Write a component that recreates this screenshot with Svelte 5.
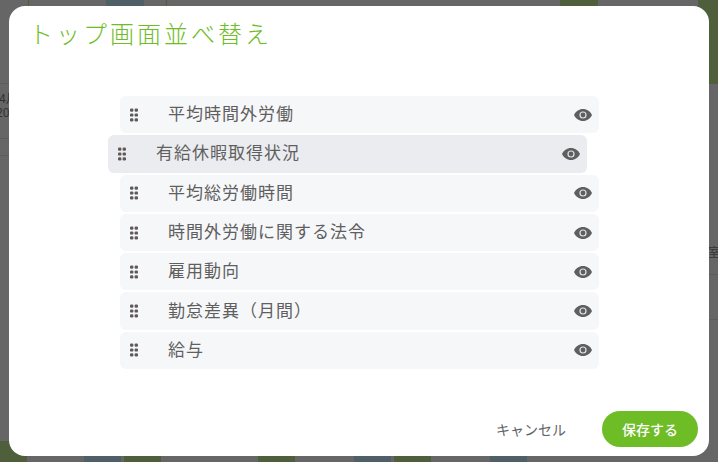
<script>
  const items = [
    { name: '平均時間外労働' },
    { name: '有給休暇取得状況', dragging: true },
    { name: '平均総労働時間' },
    { name: '時間外労働に関する法令' },
    { name: '雇用動向' },
    { name: '勤怠差異（月間）' },
    { name: '給与' }
  ]

  // chart columns still showing behind the overlay
  const bars = [
    ['blue', 106, 0, 38, 6],
    ['green', 560, 0, 38, 6],
    ['green', 698, 0, 20, 84],
    ['green', 28, 0, 1, 6],
    ['green', 166, 0, 1, 6],
    ['green', 0, 441, 27, 21],
    ['blue', 84, 456, 37, 6],
    ['green', 124, 456, 37, 6],
    ['green', 258, 456, 37, 6],
    ['blue', 354, 456, 37, 6],
    ['green', 394, 456, 37, 6],
    ['blue', 490, 456, 37, 6]
  ]
  const lines = [
    [0, 83, 9],
    [0, 138, 9],
    [0, 155, 9],
    [709, 274, 9],
    [709, 319, 9]
  ]
</script>

<div class="page">
  <div class="backdrop">
    {#each bars as [color, x, y, w, h]}
      <span class="bar {color}" style="left:{x}px;top:{y}px;width:{w}px;height:{h}px"></span>
    {/each}
    {#each lines as [x, y, w]}
      <span class="bar line" style="left:{x}px;top:{y}px;width:{w}px"></span>
    {/each}
    <span class="stray" style="left:-1px;top:92px">4月</span>
    <span class="stray" style="left:-4px;top:106px">20</span>
    <span class="stray" style="left:708px;top:246px">室</span>
  </div>

  <div class="modal">
    <h1 class="title">トップ画面並べ替え</h1>

    <ul class="list">
      {#each items as item}
        <li class="row" class:dragging={item.dragging}>
          <svg class="grip" width="8" height="14" viewBox="0 0 8 14" fill="#5f5a58">
            <rect x="0" y="0.500" width="3.400" height="3.200" rx="1.200" />
            <rect x="4.600" y="0.500" width="3.400" height="3.200" rx="1.200" />
            <rect x="0" y="5.400" width="3.400" height="3.200" rx="1.200" />
            <rect x="4.600" y="5.400" width="3.400" height="3.200" rx="1.200" />
            <rect x="0" y="10.300" width="3.400" height="3.200" rx="1.200" />
            <rect x="4.600" y="10.300" width="3.400" height="3.200" rx="1.200" />
          </svg>
          <span class="name">{item.name}</span>
          <svg class="eye" width="18" height="12" viewBox="0 0 18 12">
            <path fill="#5f5f5f" d="M9 0C5 0 1.700 2.500 0 6c1.700 3.500 5 6 9 6s7.300-2.500 9-6c-1.700-3.500-5-6-9-6z" />
            <circle cx="9" cy="6" r="3.600" fill="#dfe3e6" />
            <circle cx="9" cy="6" r="2.400" fill="#5f5f5f" />
          </svg>
        </li>
      {/each}
    </ul>

    <div class="actions">
      <button class="cancel">キャンセル</button>
      <button class="save">保存する</button>
    </div>
  </div>
</div>

<style>
  :global(body) {
    margin: 0;
    overflow: hidden;
  }
  .page {
    width: 718px;
    height: 462px;
    background: #666;
    box-sizing: border-box;
    padding: 6px 9px;
    position: relative;
    overflow: hidden;
    font-family: Roboto, "Noto Sans CJK JP", sans-serif;
  }
  .backdrop {
    position: absolute;
    inset: 0;
  }
  .bar {
    position: absolute;
  }
  .blue { background: #4f5f68; }
  .green { background: #4f5f3c; }
  .line {
    height: 1px;
    background: #5c5c5c;
  }
  .stray {
    position: absolute;
    font-size: 12px;
    line-height: 14px;
    color: #333;
  }
  .modal {
    position: relative;
    width: 700px;
    height: 450px;
    background: #fff;
    border-radius: 16px;
    display: flex;
    flex-direction: column;
  }
  .title {
    margin: 0;
    padding: 13px 0 0 20px;
    font-size: 24px;
    line-height: 32px;
    font-weight: 300;
    letter-spacing: 3px;
    color: #6ebc26;
  }
  .list {
    list-style: none;
    margin: 45px 0 0 111px;
    padding: 0;
    width: 479px;
    display: flex;
    flex-direction: column;
    gap: 2px;
  }
  .row {
    height: 37.300px;
    background: #f6f7f9;
    border-radius: 6px;
    display: flex;
    align-items: center;
    padding: 0 7px 0 10px;
    color: #5f5f5f;
    font-size: 17px;
    letter-spacing: 1px;
  }
  .row.dragging {
    background: #ebecef;
    transform: translateX(-12px);
  }
  .grip {
    flex: none;
  }
  .name {
    margin-left: 30px;
    flex: 1;
    line-height: 34px;
    margin-bottom: 1px;
  }
  .eye {
    flex: none;
  }
  .actions {
    margin-top: auto;
    padding: 0 11px 9px 0;
    display: flex;
    justify-content: flex-end;
    align-items: center;
    gap: 36px;
  }
  button {
    border: 0;
    font: inherit;
    font-size: 14px;
    padding: 0;
  }
  .cancel {
    background: none;
    color: #5f6368;
  }
  .save {
    width: 96px;
    height: 36px;
    border-radius: 18px;
    background: #6ebc26;
    color: #fff;
    font-weight: 500;
  }
</style>
